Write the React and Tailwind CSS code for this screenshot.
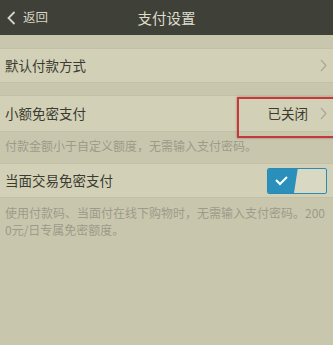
import React from "react";

const font = { fontFamily: '"Noto Sans CJK SC", "Noto Sans", sans-serif' };

function Chevron() {
  return (
    <svg width="7" height="13" viewBox="0 0 7 13" className="shrink-0">
      <path d="M1 1 L6 6.5 L1 12" fill="none" stroke="#a9a896" strokeWidth="1.2" />
    </svg>
  );
}

function Row({ label, children, className = "" }) {
  return (
    <div className={`relative flex items-center justify-between bg-[#d2d1b7] border-y border-[#c2c1a8] pl-[5px] pr-[6px] ${className}`}>
      <span className="text-[13.5px] text-[#3b3b30]">{label}</span>
      {children}
    </div>
  );
}

export default function App() {
  return (
    <div className="w-[333px] h-[345px] overflow-hidden bg-[#c8c7ae]" style={font}>
      <div className="relative flex items-center justify-center h-[35px] bg-[#3f4037]">
        <div className="absolute left-[7px] top-0 h-full flex items-center gap-[7px]">
          <svg width="9" height="14" viewBox="0 0 9 14">
            <path d="M7.5 1 L1.5 7 L7.5 13" fill="none" stroke="#d6d6c6" strokeWidth="1.8" />
          </svg>
          <span className="text-[12.5px] text-[#d6d6c6]">返回</span>
        </div>
        <span className="text-[14.5px] text-[#dcdccc]">支付设置</span>
      </div>

      <div className="h-[13px]" />
      <Row label="默认付款方式" className="h-[35px]">
        <Chevron />
      </Row>

      <div className="h-[12px]" />
      <Row label="小额免密支付" className="h-[37px]">
        <div className="flex items-center gap-[12px]">
          <span className="text-[13.5px] text-[#3b3b30]">已关闭</span>
          <Chevron />
        </div>
        <div className="absolute left-[237px] top-[1px] w-[100px] h-[41px] border-2 border-[#c23a3b] shadow-[0_0_2px_rgba(120,30,30,0.5)]" />
      </Row>
      <div className="h-[31px] pl-[5px] pt-[5px] text-[12px] text-[#9c9b88]">
        付款金额小于自定义额度，无需输入支付密码。
      </div>

      <Row label="当面交易免密支付" className="h-[35px]">
        <div className="relative w-[60px] h-[26px] rounded-[2px] border-[1.5px] border-[#2a8cb6] bg-[#d9d8c2] overflow-hidden">
          <svg width="60" height="26" viewBox="0 0 60 26" className="absolute -left-[1.5px] -top-[1.5px]">
            <polygon points="0,0 31,0 27,26 0,26" fill="#2a8fba" />
            <path d="M9 13 L13 17 L20 10" fill="none" stroke="#ffffff" strokeWidth="2" />
          </svg>
        </div>
      </Row>
      <div className="pl-[5px] pr-[6px] pt-[6px] text-[12px] leading-[17px] text-[#9c9b88] break-all">
        使用付款码、当面付在线下购物时，无需输入支付密码。2000元/日专属免密额度。
      </div>
    </div>
  );
}
